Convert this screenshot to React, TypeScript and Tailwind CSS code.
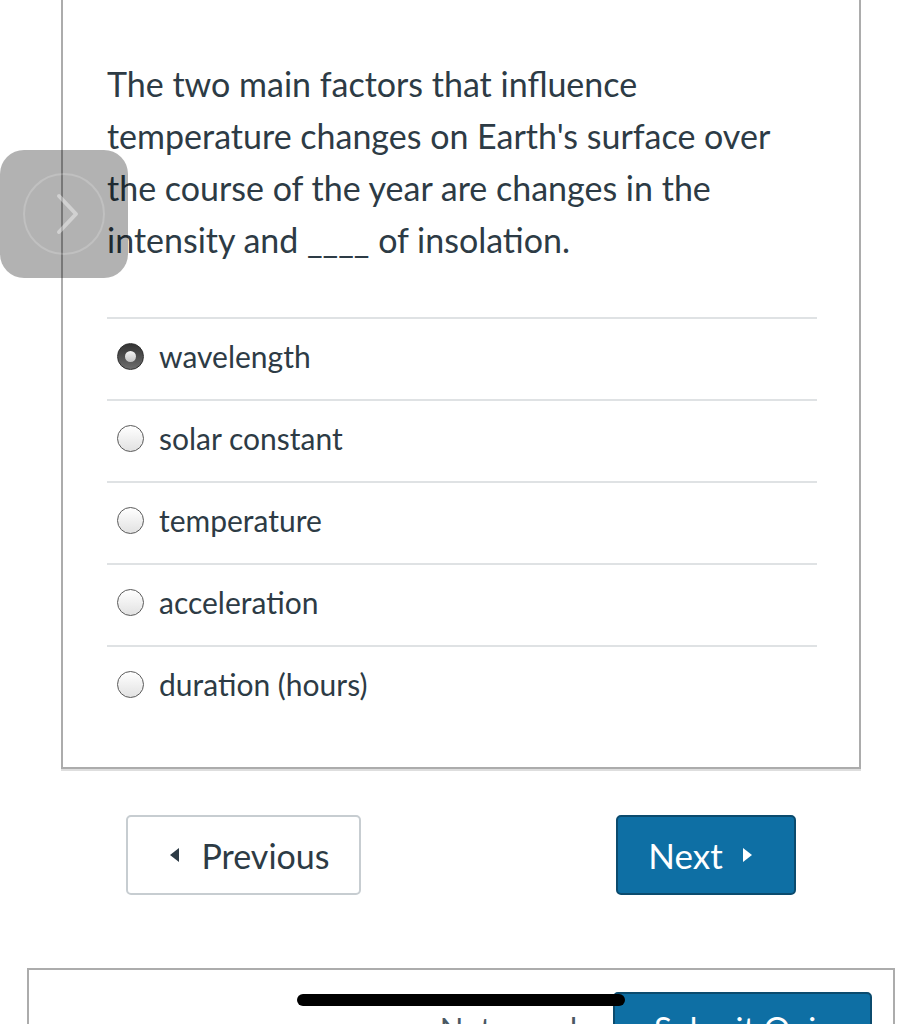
import React from 'react';

const options = [
  { label: 'wavelength', checked: true },
  { label: 'solar constant', checked: false },
  { label: 'temperature', checked: false },
  { label: 'acceleration', checked: false },
  { label: 'duration (hours)', checked: false },
];

function Radio({ checked }: { checked: boolean }) {
  if (checked) {
    return (
      <span className="flex h-[27px] w-[27px] shrink-0 items-center justify-center rounded-full border border-[#2e2e2e] bg-gradient-to-b from-[#333333] to-[#6e6e6e]">
        <span className="h-[11px] w-[11px] rounded-full bg-gradient-to-b from-[#f6f6f6] to-[#c4c4c4]" />
      </span>
    );
  }
  return (
    <span className="h-[27px] w-[27px] shrink-0 rounded-full border-[1.5px] border-[#5a5a5a] bg-gradient-to-b from-white to-[#e2e2e2]" />
  );
}

function App() {
  return (
    <div className="relative h-[1024px] w-[921px] overflow-hidden bg-white font-['Lato','Noto_Sans',sans-serif] text-[#2d3b45]">
      {/* question card */}
      <div className="ml-[61px] w-[800px] border-x-2 border-b-2 border-[#acacac] pb-[40px] pl-[44px] pr-[42px] pt-[58px] shadow-[0_2px_0_#dedede]">
        <p className="text-[34px] leading-[52px]">
          The two main factors that influence
          <br />
          temperature changes on Earth's surface over
          <br />
          the course of the year are changes in the
          <br />
          intensity and ____ of insolation.
        </p>
        <div className="mt-[51px]">
          {options.map((opt) => (
            <label
              key={opt.label}
              className="flex h-[82px] items-center gap-[15px] border-t-2 border-[#dfe2e4] pb-[6px] pl-[10px]"
            >
              <Radio checked={opt.checked} />
              <span className="text-[30px] leading-none">{opt.label}</span>
            </label>
          ))}
        </div>
      </div>

      {/* nav buttons */}
      <div className="ml-[126px] mt-[46px] flex w-[670px] justify-between">
        <button className="flex h-[80px] w-[235px] items-center justify-center gap-[22px] rounded-[5px] border-2 border-[#c7cdd1] bg-white pl-[13px] text-[34px] text-[#2d3b45]">
          <span className="h-0 w-0 border-y-[7px] border-r-[9px] border-y-transparent border-r-[#2d3b45]" />
          Previous
        </button>
        <button className="flex h-[80px] w-[180px] items-center justify-center gap-[20px] rounded-[5px] border-2 border-[#0b4b6e] bg-[#0e6fa4] pr-[12px] text-[35px] text-white">
          Next
          <span className="h-0 w-0 border-y-[7px] border-l-[9px] border-y-transparent border-l-white" />
        </button>
      </div>

      {/* bottom card */}
      <div className="ml-[27px] mt-[73px] flex h-[200px] w-[868px] items-start justify-end gap-[36px] border-2 border-[#acacac] pr-[21px] pt-[22px]">
        <span className="mt-[16px] text-[31px] leading-[40px] text-[#4a5863]">Not saved</span>
        <button className="flex h-[80px] w-[259px] items-start justify-center rounded-[5px] border-2 border-[#0b4b6e] bg-[#0e6fa4] pt-[14px] text-[33px] leading-[40px] text-white">
          Submit Quiz
        </button>
      </div>

      {/* floating overlay button */}
      <div className="absolute left-0 top-[150px] flex h-[128px] w-[128px] items-center justify-center rounded-[24px] bg-black/30">
        <svg width="84" height="84" viewBox="0 0 84 84" fill="none">
          <circle cx="42" cy="42" r="40" stroke="rgba(255,255,255,0.18)" strokeWidth="2" />
          <path d="M37 24 L54 42 L37 60" stroke="rgba(255,255,255,0.4)" strokeWidth="4" strokeLinecap="round" strokeLinejoin="round" />
        </svg>
      </div>

      {/* home indicator */}
      <div className="absolute left-[297px] top-[994px] h-[12px] w-[328px] rounded-full bg-black" />
    </div>
  );
}

export default App;
